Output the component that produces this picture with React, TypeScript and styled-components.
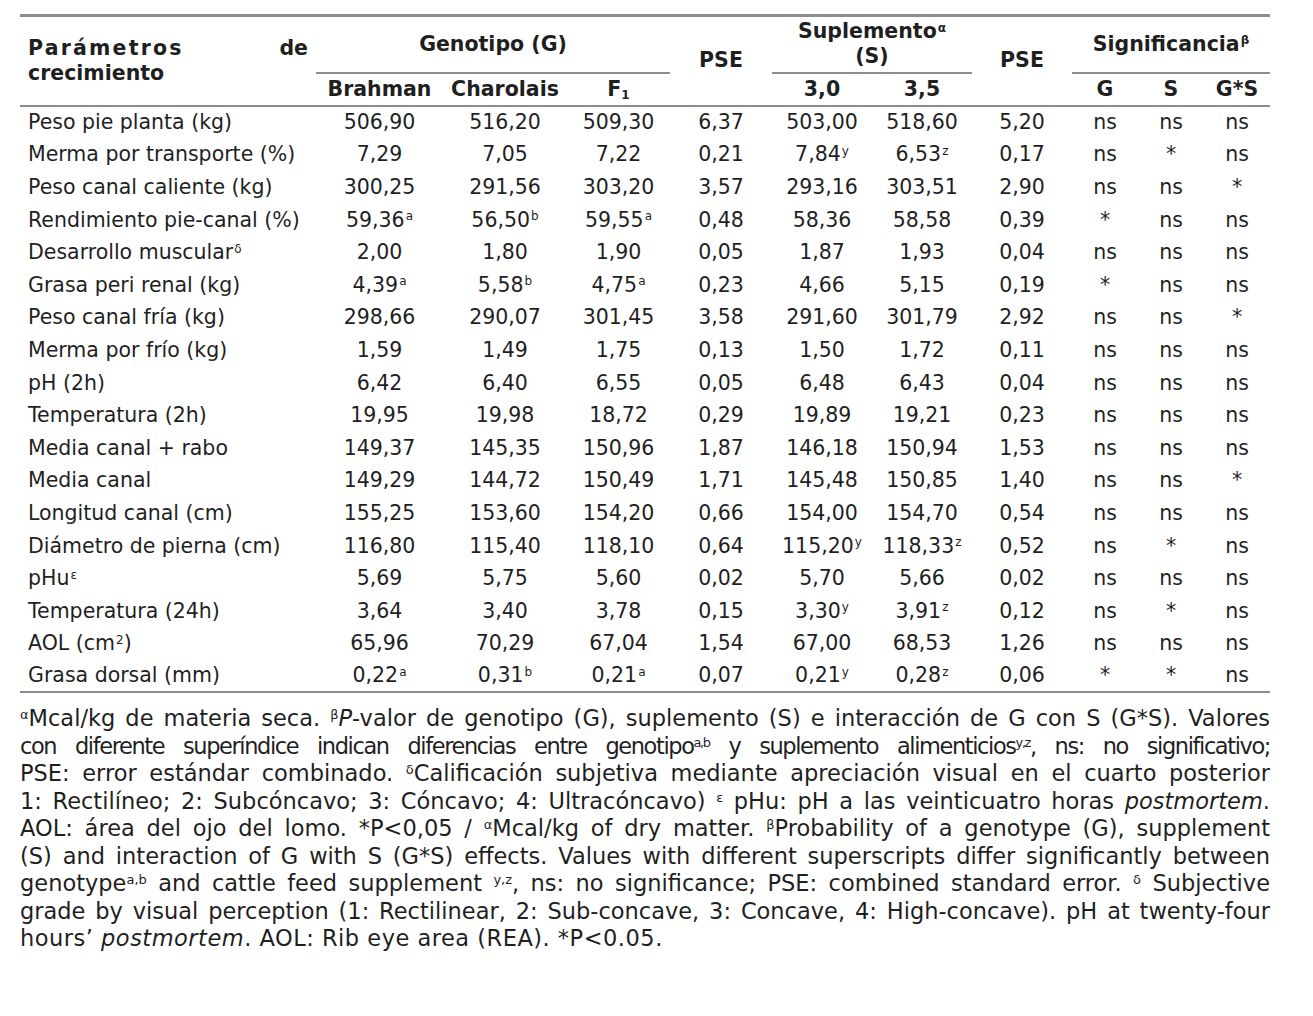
import React from "react";
import styled, { createGlobalStyle } from "styled-components";

const LINE = "#8c8c8c";

const Global = createGlobalStyle`
  html, body { margin: 0; padding: 0; background: #ffffff; }
  body {
    font-family: "DejaVu Sans", Verdana, sans-serif;
    color: #1f1f1f;
  }
`;

const Page = styled.div`
  width: 1250px;
  padding: 14px 0 0 20px;
`;

const Table = styled.table`
  width: 1250px;
  border-collapse: collapse;
  table-layout: fixed;
  font-size: 20.5px;
  border-top: 3px solid ${LINE};
  border-bottom: 2px solid ${LINE};
`;

const Col = styled.col<{ $w: number }>`
  width: ${(p) => p.$w}px;
`;

const Head = styled.thead`
  border-bottom: 2px solid ${LINE};
`;

const HeadRow = styled.tr<{ $h: number }>`
  height: ${(p) => p.$h}px;
`;

const Th = styled.th<{ $rule?: boolean }>`
  font-weight: bold;
  text-align: center;
  vertical-align: middle;
  padding: 0;
  line-height: 25px;
  white-space: nowrap;
  border-bottom: ${(p) => (p.$rule ? `2px solid ${LINE}` : "none")};
`;

const LabelTh = styled.th`
  font-weight: bold;
  text-align: left;
  vertical-align: middle;
  padding: 0 8px;
  line-height: 25px;
`;

const SpreadLine = styled.div`
  display: flex;
  justify-content: space-between;
`;

const Wide = styled.span`
  letter-spacing: 2.2px;
`;

const Row = styled.tr`
  height: 32.6px;
`;

const Td = styled.td`
  text-align: center;
  vertical-align: middle;
  padding: 0;
  white-space: nowrap;
`;

const LabelTd = styled(Td)`
  text-align: left;
  padding-left: 8px;
`;

const Sup = styled.sup`
  font-size: 12px;
  line-height: 0;
  vertical-align: 0.55em;
  margin-left: 1px;
`;

const Sub = styled.sub`
  font-size: 12px;
  line-height: 0;
  vertical-align: -0.25em;
`;

const Notes = styled.div`
  width: 1250px;
  margin-top: 12px;
  font-size: 22.5px;
  line-height: 27.5px;
`;

const NoteLine = styled.div<{ $ls?: number; $last?: boolean }>`
  text-align: justify;
  text-align-last: ${(p) => (p.$last ? "left" : "justify")};
  letter-spacing: ${(p) => p.$ls ?? 0}px;
`;

const NoteSup = styled.sup`
  font-size: 13px;
  line-height: 0;
  vertical-align: 0.55em;
`;

const Em = styled.i`
  font-style: italic;
`;

type Cell = React.ReactNode;

const v = (n: string, s?: string): Cell =>
  s ? (
    <>
      {n}
      <Sup>{s}</Sup>
    </>
  ) : (
    n
  );

const rows: { label: Cell; cells: Cell[] }[] = [
  { label: "Peso pie planta (kg)", cells: ["506,90", "516,20", "509,30", "6,37", "503,00", "518,60", "5,20", "ns", "ns", "ns"] },
  { label: "Merma por transporte (%)", cells: ["7,29", "7,05", "7,22", "0,21", v("7,84", "y"), v("6,53", "z"), "0,17", "ns", "*", "ns"] },
  { label: "Peso canal caliente (kg)", cells: ["300,25", "291,56", "303,20", "3,57", "293,16", "303,51", "2,90", "ns", "ns", "*"] },
  { label: "Rendimiento pie-canal (%)", cells: [v("59,36", "a"), v("56,50", "b"), v("59,55", "a"), "0,48", "58,36", "58,58", "0,39", "*", "ns", "ns"] },
  { label: v("Desarrollo muscular", "δ"), cells: ["2,00", "1,80", "1,90", "0,05", "1,87", "1,93", "0,04", "ns", "ns", "ns"] },
  { label: "Grasa peri renal (kg)", cells: [v("4,39", "a"), v("5,58", "b"), v("4,75", "a"), "0,23", "4,66", "5,15", "0,19", "*", "ns", "ns"] },
  { label: "Peso canal fría (kg)", cells: ["298,66", "290,07", "301,45", "3,58", "291,60", "301,79", "2,92", "ns", "ns", "*"] },
  { label: "Merma por frío (kg)", cells: ["1,59", "1,49", "1,75", "0,13", "1,50", "1,72", "0,11", "ns", "ns", "ns"] },
  { label: "pH (2h)", cells: ["6,42", "6,40", "6,55", "0,05", "6,48", "6,43", "0,04", "ns", "ns", "ns"] },
  { label: "Temperatura (2h)", cells: ["19,95", "19,98", "18,72", "0,29", "19,89", "19,21", "0,23", "ns", "ns", "ns"] },
  { label: "Media canal + rabo", cells: ["149,37", "145,35", "150,96", "1,87", "146,18", "150,94", "1,53", "ns", "ns", "ns"] },
  { label: "Media canal", cells: ["149,29", "144,72", "150,49", "1,71", "145,48", "150,85", "1,40", "ns", "ns", "*"] },
  { label: "Longitud canal (cm)", cells: ["155,25", "153,60", "154,20", "0,66", "154,00", "154,70", "0,54", "ns", "ns", "ns"] },
  { label: "Diámetro de pierna (cm)", cells: ["116,80", "115,40", "118,10", "0,64", v("115,20", "y"), v("118,33", "z"), "0,52", "ns", "*", "ns"] },
  { label: v("pHu", "ε"), cells: ["5,69", "5,75", "5,60", "0,02", "5,70", "5,66", "0,02", "ns", "ns", "ns"] },
  { label: "Temperatura (24h)", cells: ["3,64", "3,40", "3,78", "0,15", v("3,30", "y"), v("3,91", "z"), "0,12", "ns", "*", "ns"] },
  {
    label: (
      <>
        AOL (cm<Sup>2</Sup>)
      </>
    ),
    cells: ["65,96", "70,29", "67,04", "1,54", "67,00", "68,53", "1,26", "ns", "ns", "ns"],
  },
  { label: "Grasa dorsal (mm)", cells: [v("0,22", "a"), v("0,31", "b"), v("0,21", "a"), "0,07", v("0,21", "y"), v("0,28", "z"), "0,06", "*", "*", "ns"] },
];

const widths = [296, 127, 124, 103, 102, 100, 100, 100, 66, 66, 66];

export default function App() {
  return (
    <>
      <Global />
      <Page>
        <Table>
          <colgroup>
            {widths.map((w, i) => (
              <Col key={i} $w={w} />
            ))}
          </colgroup>
          <Head>
            <HeadRow $h={57}>
              <LabelTh rowSpan={2}>
                <SpreadLine>
                  <Wide>Parámetros</Wide>
                  <span>de</span>
                </SpreadLine>
                <div>crecimiento</div>
              </LabelTh>
              <Th colSpan={3} $rule>
                Genotipo (G)
              </Th>
              <Th rowSpan={2}>PSE</Th>
              <Th colSpan={2} $rule>
                Suplemento<Sup>α</Sup>
                <br />
                (S)
              </Th>
              <Th rowSpan={2}>PSE</Th>
              <Th colSpan={3} $rule>
                Significancia<Sup>β</Sup>
              </Th>
            </HeadRow>
            <HeadRow $h={33}>
              <Th>Brahman</Th>
              <Th>Charolais</Th>
              <Th>
                F<Sub>1</Sub>
              </Th>
              <Th>3,0</Th>
              <Th>3,5</Th>
              <Th>G</Th>
              <Th>S</Th>
              <Th>G*S</Th>
            </HeadRow>
          </Head>
          <tbody>
            {rows.map((r, i) => (
              <Row key={i}>
                <LabelTd>{r.label}</LabelTd>
                {r.cells.map((c, j) => (
                  <Td key={j}>{c}</Td>
                ))}
              </Row>
            ))}
          </tbody>
        </Table>
        <Notes>
          <NoteLine>
            <NoteSup>α</NoteSup>Mcal/kg de materia seca. <NoteSup>β</NoteSup>
            <Em>P</Em>-valor de genotipo (G), suplemento (S) e interacción de G con S (G*S). Valores
          </NoteLine>
          <NoteLine $ls={-1.4}>
            con diferente superíndice indican diferencias entre genotipo<NoteSup>a,b</NoteSup> y suplemento
            alimenticios<NoteSup>y,z</NoteSup>, ns: no significativo;
          </NoteLine>
          <NoteLine>
            PSE: error estándar combinado. <NoteSup>δ</NoteSup>Calificación subjetiva mediante apreciación visual en el
            cuarto posterior
          </NoteLine>
          <NoteLine>
            1: Rectilíneo; 2: Subcóncavo; 3: Cóncavo; 4: Ultracóncavo) <NoteSup>ε</NoteSup> pHu: pH a las veinticuatro
            horas <Em>postmortem</Em>.
          </NoteLine>
          <NoteLine>
            AOL: área del ojo del lomo. *P&lt;0,05 / <NoteSup>α</NoteSup>Mcal/kg of dry matter.{" "}
            <NoteSup>β</NoteSup>Probability of a genotype (G), supplement
          </NoteLine>
          <NoteLine>
            (S) and interaction of G with S (G*S) effects. Values with different superscripts differ significantly
            between
          </NoteLine>
          <NoteLine>
            genotype<NoteSup>a,b</NoteSup> and cattle feed supplement <NoteSup>y,z</NoteSup>, ns: no significance; PSE:
            combined standard error. <NoteSup>δ</NoteSup> Subjective
          </NoteLine>
          <NoteLine>
            grade by visual perception (1: Rectilinear, 2: Sub-concave, 3: Concave, 4: High-concave). pH at
            twenty-four
          </NoteLine>
          <NoteLine $last $ls={0.5}>
            hours’ <Em>postmortem</Em>. AOL: Rib eye area (REA). *P&lt;0.05.
          </NoteLine>
        </Notes>
      </Page>
    </>
  );
}
